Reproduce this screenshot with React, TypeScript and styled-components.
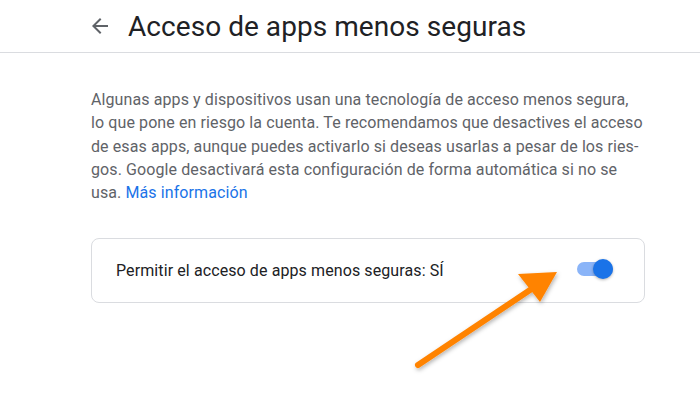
import React from 'react';
import styled, {createGlobalStyle} from 'styled-components';

const GlobalStyle = createGlobalStyle`
    body {
        margin: 0;
        background: #fff;
        font-family: Roboto, 'Liberation Sans', sans-serif;
    }
`;

const Page = styled.div`
    position: relative;
    width: 700px;
    height: 407px;
    overflow: hidden;
`;

const Header = styled.header`
    display: flex;
    align-items: center;
    gap: 16px;
    height: 52px;
    padding-left: 88px;
    border-bottom: 1px solid #dadce0;
`;

const BackButton = styled.span`
    display: flex;
    width: 24px;
    height: 24px;
    color: #5f6368;
`;

const Title = styled.h1`
    margin: 0;
    font-size: 28px;
    font-weight: 400;
    color: #202124;
    letter-spacing: 0.05px;
`;

const Content = styled.main`
    padding: 35px 0 0 91px;
    width: 554px;
`;

const Intro = styled.p`
    margin: 0;
    font-size: 16px;
    line-height: 23.3px;
    color: #5f6368;
    letter-spacing: 0.1px;
    hyphens: manual;
`;

const Link = styled.a`
    color: #1a73e8;
    text-decoration: none;
`;

const Card = styled.div`
    display: flex;
    align-items: center;
    justify-content: space-between;
    margin-top: 34px;
    height: 63px;
    padding: 0 31px 0 24px;
    border: 1px solid #dadce0;
    border-radius: 8px;
`;

const CardLabel = styled.span`
    font-size: 16px;
    color: #202124;
    letter-spacing: 0.1px;
`;

const Switch = styled.span<{$on: boolean}>`
    position: relative;
    width: 36px;
    height: 14px;
    margin-bottom: 3px;
    border-radius: 7px;
    background: ${(p) => (p.$on ? '#8ab4f8' : '#bdc1c6')};

    &::after {
        content: '';
        position: absolute;
        top: -3px;
        left: ${(p) => (p.$on ? '16px' : '0')};
        width: 20px;
        height: 20px;
        border-radius: 50%;
        background: ${(p) => (p.$on ? '#1a73e8' : '#fff')};
        box-shadow: 0 1px 3px rgba(0, 0, 0, 0.3);
    }
`;

const Annotation = styled.svg`
    position: absolute;
    left: 0;
    top: 0;
    pointer-events: none;
`;

const ArrowBack = () => (
    <svg width="24" height="24" viewBox="0 0 24 24" fill="currentColor">
        <path d="M20 11H7.83l5.59-5.59L12 4l-8 8 8 8 1.41-1.41L7.83 13H20v-2z" />
    </svg>
);

export default function App() {
    return (
        <Page>
            <GlobalStyle />
            <Header>
                <BackButton>
                    <ArrowBack />
                </BackButton>
                <Title>Acceso de apps menos seguras</Title>
            </Header>
            <Content>
                <Intro>
                    Algunas apps y dispositivos usan una tecnología de acceso menos segura, lo que pone en riesgo
                    la cuenta. Te recomendamos que desactives el acceso de esas apps, aunque puedes activarlo si
                    deseas usarlas a pesar de los ries&shy;gos. Google desactivará esta configuración de forma
                    automática si no se usa. <Link href="#">Más información</Link>
                </Intro>
                <Card>
                    <CardLabel>Permitir el acceso de apps menos seguras: SÍ</CardLabel>
                    <Switch $on />
                </Card>
            </Content>
            <Annotation width="700" height="407" viewBox="0 0 700 407">
                <defs>
                    <filter id="shadow" x="-20%" y="-20%" width="140%" height="140%">
                        <feDropShadow dx="1" dy="2" stdDeviation="2" floodColor="#000" floodOpacity="0.3" />
                    </filter>
                </defs>
                <g filter="url(#shadow)" fill="#ff8300">
                    <line x1="418" y1="365" x2="530" y2="290" stroke="#ff8300" strokeWidth="6" strokeLinecap="round" />
                    <path d="M557 272 L540 302 L518 274 Z" />
                </g>
            </Annotation>
        </Page>
    );
}
